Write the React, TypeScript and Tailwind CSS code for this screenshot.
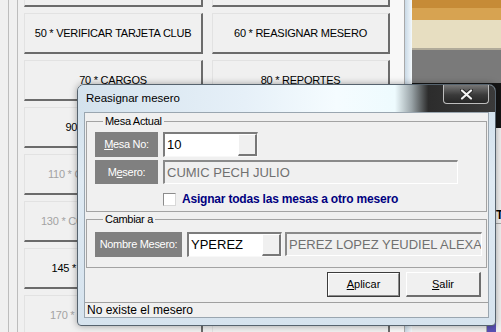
import React from "react"

const bgRows: [string, boolean, string, boolean][] = [
  ["", true, "", true],
  ["50 * VERIFICAR TARJETA CLUB", true, "60 * REASIGNAR MESERO", true],
  ["70 * CARGOS", true, "80 * REPORTES", true],
  ["90 * DESCUENTOS", true, "100 * PROPINAS", true],
  ["110 * CANCELAR CUENTA", false, "120 * REABRIR CUENTA", false],
  ["130 * CORTESIA DE CUENTA", false, "140 * DIVIDIR CUENTA", true],
  ["145 * SEPARAR CUENTA", true, "150 * CAMBIAR PRECIO", true],
  ["170 * CAMBIAR DE MESA", false, "180 * SALIR", true],
]

const BgButton = ({ label, enabled }: { label: string; enabled: boolean }) => (
  <div
    className={`flex items-center justify-center bg-[#f0f0f0] border-t border-l border-t-[#e2e2e2] border-l-[#e2e2e2] border-b-2 border-r-2 border-b-[#6b6b6b] border-r-[#6b6b6b] text-[11px] tracking-[-0.25px] whitespace-nowrap overflow-hidden ${
      enabled ? "text-black" : "text-[#a3a3a3]"
    }`}
  >
    {label}
  </div>
)

const GrayLabel = ({ w, h, children }: { w: string; h: string; children: React.ReactNode }) => (
  <div
    className={`${w} ${h} bg-[#808080] text-white text-[11px] tracking-[-0.3px] flex items-center justify-center shrink-0`}
  >
    {children}
  </div>
)

const LookupField = ({ value }: { value: string }) => (
  <div className="w-[95px] h-[25px] flex border-t-2 border-l-2 border-t-[#7c7c7c] border-l-[#7c7c7c] border-b border-r border-b-[#f8f8f8] border-r-[#f8f8f8] shrink-0">
    <div className="flex-1 bg-white text-[13px] leading-[21px] pl-[2px] text-black">{value}</div>
    <div className="w-[19px] bg-[#f0f0f0] border-t border-l border-t-white border-l-white border-b-2 border-r-2 border-b-[#777] border-r-[#777]" />
  </div>
)

const DisabledField = ({ w, h, value }: { w: string; h: string; value: string }) => (
  <div
    className={`${w} ${h} shrink-0 bg-[#f0f0f0] border-t-2 border-l-2 border-t-[#8a8a8a] border-l-[#8a8a8a] border-b border-r border-b-white border-r-white text-[13px] text-[#707070] pl-[2px] whitespace-nowrap overflow-hidden flex items-center`}
  >
    {value}
  </div>
)

export default function App() {
  return (
    <div className="relative w-[501px] h-[332px] overflow-hidden bg-[#f0f0f0] flex font-['Liberation_Sans',Arial,sans-serif]">
      {/* left strip */}
      <div className="w-[24px] h-full flex shrink-0">
        <div className="w-[8px]" />
        <div className="w-px bg-[#bdbdbd]" />
        <div className="w-[8px]" />
        <div className="w-px bg-[#bdbdbd]" />
        <div className="w-[6px]" />
      </div>

      {/* menu buttons */}
      <div className="w-[366px] shrink-0 self-start -mt-[34px] grid grid-cols-[179px_178px] gap-x-[9px] gap-y-[6px] auto-rows-[41px]">
        {bgRows.map(([a, ea, b, eb], i) => (
          <React.Fragment key={i}>
            <BgButton label={a} enabled={ea} />
            <BgButton label={b} enabled={eb} />
          </React.Fragment>
        ))}
      </div>

      <div className="w-[22px] shrink-0 flex">
        <div className="w-[14px] bg-[#f8f8f8]" />
        <div className="w-px bg-[#a9a9a9]" />
        <div className="w-[7px] bg-[linear-gradient(to_right,#c9d9e6,#f4f9fc)]" />
      </div>

      {/* picture on the right */}
      <div className="flex-1 flex flex-col">
        <div className="h-[8px] bg-[#c68b37]" />
        <div className="h-[12px] bg-[#d7a351]" />
        <div className="h-[28px] bg-[#e7dec1]" />
        <div className="h-[2px] bg-[#b1ab9a]" />
        <div className="h-[33px] bg-[#7a7a7a]" />
        <div className="h-[45px] bg-[#151515]" />
        <div className="h-[96px] bg-[#f0f0f0] border-b border-[#a8a8a8] flex items-end pl-[84px] text-[12px] leading-[14px] pb-[1px] font-bold whitespace-nowrap overflow-hidden">
          TOTAL
        </div>
        <div className="flex-1 bg-[#f0f0f0] flex">
          <div className="w-[74px]" />
          <div className="w-px bg-[#a8a8a8]" />
        </div>
      </div>

      <div className="absolute right-[5px] bottom-0 w-[9px] h-[11px] rounded-t-[3px] bg-[#5a50b4]" />

      {/* dialog */}
      <div className="absolute left-[77px] top-[84px] w-[419px] h-[242px] flex flex-col rounded-t-[7px] rounded-b-[4px] border border-[#56636e] bg-[linear-gradient(to_bottom,#cfdfeb,#dfeaf3_40%,#d6e3ee)] shadow-[0_0_7px_rgba(0,0,0,0.35)] overflow-hidden">
        <div className="relative h-[27px] shrink-0 bg-[linear-gradient(to_right,#d4e2ed_0%,#e6f0f8_40%,#f5fcff_62%,#eefbfe_76%,#9aa4a8_80%,#2c2c2c_84%,#3a3a3a_100%)] flex items-center pl-[8px] text-[11.5px] text-black">
          Reasignar mesero
          <div className="absolute right-[6px] top-0 w-[46px] h-[19px] rounded-b-[4px] border border-t-0 border-[#bdbdbd] bg-[linear-gradient(to_bottom,#777,#3a3a3a_55%,#262626)] flex items-center justify-center">
            <svg width="13" height="11" viewBox="0 0 13 11">
              <path d="M2 1.5 L11 9.5 M11 1.5 L2 9.5" stroke="#2a2a2a" strokeWidth="4.2" strokeLinecap="round" />
              <path d="M2 1.5 L11 9.5 M11 1.5 L2 9.5" stroke="#f2f2f2" strokeWidth="2.2" strokeLinecap="round" />
            </svg>
          </div>
        </div>

        <div className="flex-1 mx-[6px] mb-[7px] bg-[#f0f0f0] border border-[#9aa6b0] flex flex-col text-black">
          <fieldset className="mx-[1px] mt-[1px] border border-[#a3a3a3] pl-[8px] pb-[5px]">
            <legend className="ml-[8px] px-[2px] text-[11px] tracking-[-0.3px] leading-[14px]">Mesa Actual</legend>
            <div className="mt-[4px] flex">
              <GrayLabel w="w-[63px]" h="h-[25px]">
                <span>
                  <u>M</u>esa No:
                </span>
              </GrayLabel>
              <div className="ml-[5px]">
                <LookupField value="10" />
              </div>
            </div>
            <div className="mt-[3px] flex">
              <GrayLabel w="w-[63px]" h="h-[24px]">
                <span>
                  M<u>e</u>sero:
                </span>
              </GrayLabel>
              <div className="ml-[5px]">
                <DisabledField w="w-[295px]" h="h-[24px]" value="CUMIC PECH JULIO" />
              </div>
            </div>
            <div className="mt-[9px] h-[13px] flex items-center">
              <div className="ml-[68px] w-[13px] h-[13px] bg-white border border-t-[#8c8c8c] border-l-[#8c8c8c] border-b-[#d8d8d8] border-r-[#d8d8d8]" />
              <span className="ml-[6px] text-[12px] leading-[13px] font-bold tracking-[-0.2px] text-[#000080]">
                Asignar todas las mesas a otro mesero
              </span>
            </div>
          </fieldset>

          <fieldset className="mx-[1px] border border-[#a3a3a3] pl-[8px] pb-[10px]">
            <legend className="ml-[8px] px-[2px] text-[11px] tracking-[-0.3px] leading-[14px]">Cambiar a</legend>
            <div className="mt-[6px] flex">
              <GrayLabel w="w-[87px]" h="h-[25px]">
                Nombre Mesero:
              </GrayLabel>
              <div className="ml-[5px]">
                <LookupField value="YPEREZ" />
              </div>
              <div className="ml-[3px]">
                <DisabledField w="w-[197px]" h="h-[24px]" value="PEREZ LOPEZ YEUDIEL ALEXANDRO" />
              </div>
            </div>
          </fieldset>

          <div className="mt-[4px] flex justify-end gap-[6px] pr-[7px]">
            <div className="w-[73px] h-[25px] border border-[#3c3c3c]">
              <div className="w-full h-full bg-[#f0f0f0] border border-t-white border-l-white border-b-[#8a8a8a] border-r-[#8a8a8a] flex items-center justify-center text-[11px]">
                <span>
                  <u>A</u>plicar
                </span>
              </div>
            </div>
            <div className="w-[75px] h-[25px] bg-[#f0f0f0] border-t border-l border-t-white border-l-white border-b-2 border-r-2 border-b-[#6e6e6e] border-r-[#6e6e6e] flex items-center justify-center text-[11px]">
              <span>
                <u>S</u>alir
              </span>
            </div>
          </div>

          <div className="mt-auto h-[15px] border-t border-[#a0a0a0] px-[2px] text-[12px] leading-[14px]">
            No existe el mesero
          </div>
        </div>
      </div>
    </div>
  )
}
